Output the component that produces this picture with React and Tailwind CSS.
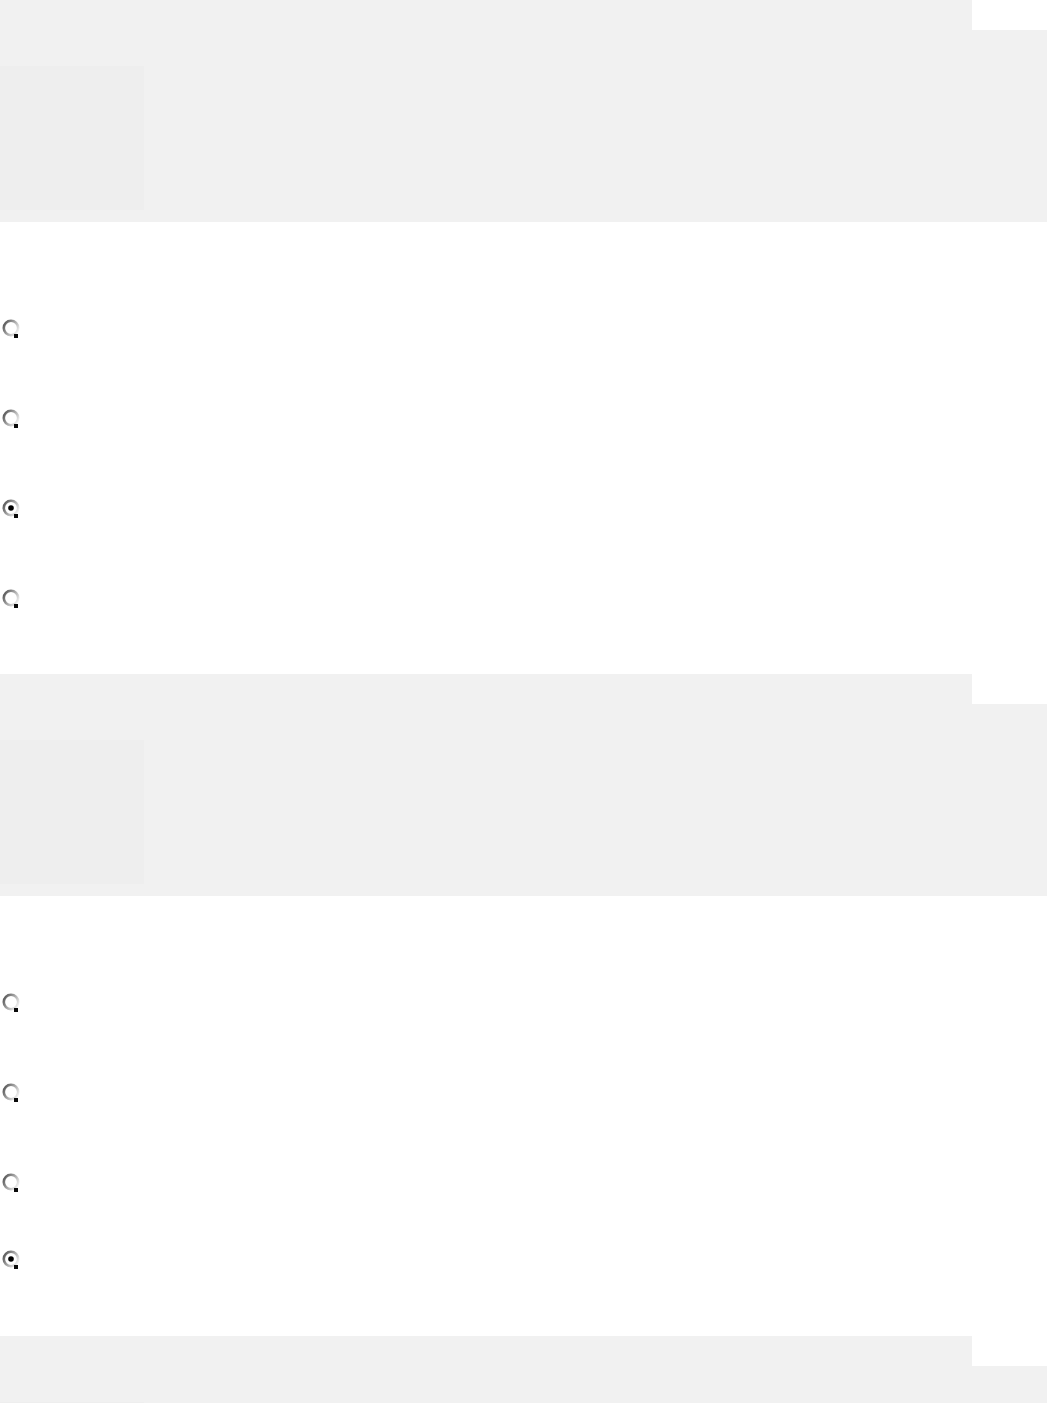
import React from "react";

function Radio({ checked }) {
  const id = checked ? "rg1" : "rg0";
  return (
    <svg width="20" height="20" viewBox="0 0 20 20" className="block">
      <defs>
        <linearGradient id={id} x1="0" y1="0.2" x2="1" y2="0.8">
          <stop offset="0" stopColor="#5a5a5a" />
          <stop offset="0.5" stopColor="#a8a8a8" />
          <stop offset="1" stopColor="#f4f4f4" />
        </linearGradient>
      </defs>
      <circle cx="10" cy="10" r="7.2" fill="#ffffff" stroke={`url(#${id})`} strokeWidth="2.6" />
      {checked && <circle cx="10" cy="10" r="2.8" fill="#000" />}
      <rect x="13" y="16" width="4" height="4" fill="#0a0a0a" />
    </svg>
  );
}

function Header() {
  return (
    <div className="flex flex-col">
      <div className="h-[30px] w-[972px] bg-[#f1f1f1]" />
      <div className="h-[192px] w-full bg-[#f1f1f1] pt-[36px]">
        <div className="h-[144px] w-[144px] bg-[#eeeeee]" />
      </div>
    </div>
  );
}

function Row({ checked, h }) {
  return (
    <div className={`flex items-center pl-[1px] ${h}`}>
      <Radio checked={checked} />
    </div>
  );
}

export default function App() {
  return (
    <div className="w-[1047px] h-[1403px] overflow-hidden bg-white font-['Liberation_Sans',sans-serif]">
      <Header />
      <div className="flex flex-col pt-[61px] pb-[31px]">
        <Row h="h-[90px]" />
        <Row h="h-[90px]" />
        <Row h="h-[90px]" checked />
        <Row h="h-[90px]" />
      </div>
      <Header />
      <div className="flex flex-col pt-[61px] pb-[45px]">
        <Row h="h-[90px]" />
        <Row h="h-[90px]" />
        <Row h="h-[90px]" />
        <Row h="h-[64px]" checked />
      </div>
      <Header />
    </div>
  );
}
